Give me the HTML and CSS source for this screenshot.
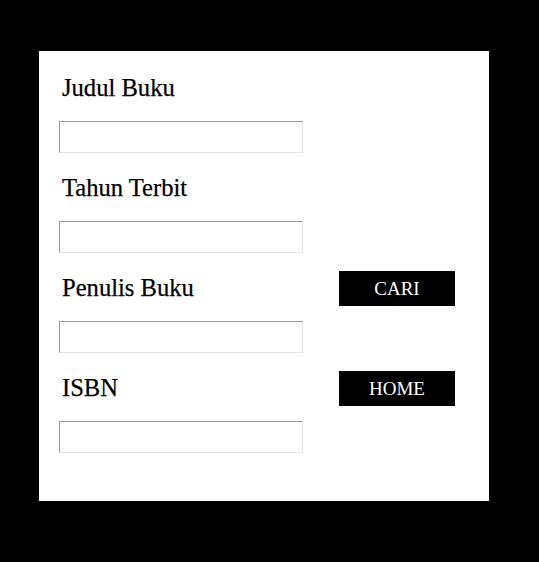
FILE: index.html
```html
<!DOCTYPE html>
<html>
<head>
<meta charset="utf-8">
<link rel="stylesheet" href="styles.css">
</head>
<body>
<form class="panel">
  <div class="field f1"><label class="label">Judul Buku</label><input class="input" type="text"></div>
  <div class="field f2"><label class="label">Tahun Terbit</label><input class="input" type="text"></div>
  <div class="field f3"><label class="label">Penulis Buku</label><input class="input" type="text"></div>
  <div class="field f4"><label class="label">ISBN</label><input class="input" type="text"></div>
  <button class="btn b1" type="button">CARI</button>
  <button class="btn b2" type="button">HOME</button>
</form>
</body>
</html>
```
FILE: styles.css
```css
html, body {
  margin: 0;
  background: #000;
}
body {
  padding: 51px 0 0 39px;
  height: 562px;
  box-sizing: border-box;
  font-family: "Liberation Serif", "Times New Roman", serif;
}
.panel {
  width: 450px;
  height: 450px;
  box-sizing: border-box;
  background: #fff;
  padding: 23px 0 0 20px;
  display: grid;
  grid-template-columns: 244px 116px;
  grid-auto-rows: 100px;
  column-gap: 36px;
  align-content: start;
}
.field {
  display: flex;
  flex-direction: column;
  grid-column: 1;
}
.f1 { grid-row: 1; }
.f2 { grid-row: 2; }
.f3 { grid-row: 3; }
.f4 { grid-row: 4; }
.label {
  font-size: 24.6px;
  line-height: 28px;
  height: 28px;
  padding-left: 3px;
  margin-bottom: 19px;
  color: #000;
  -webkit-text-stroke: 0.25px #000;
}
.input {
  width: 244px;
  height: 32px;
  box-sizing: border-box;
  margin: 0;
  padding: 0;
  border-style: solid;
  border-width: 1px;
  border-color: #999 #e3e3e3 #e3e3e3 #999;
  background: #fff;
  outline: none;
}
.btn {
  grid-column: 2;
  align-self: start;
  margin-top: -3px;
  width: 116px;
  height: 35px;
  padding: 0;
  border: 0;
  background: #000;
  color: #fff;
  font-family: "Liberation Serif", "Times New Roman", serif;
  font-size: 19px;
  line-height: 35px;
  text-align: center;
}
.b1 { grid-row: 3; }
.b2 { grid-row: 4; }
```
